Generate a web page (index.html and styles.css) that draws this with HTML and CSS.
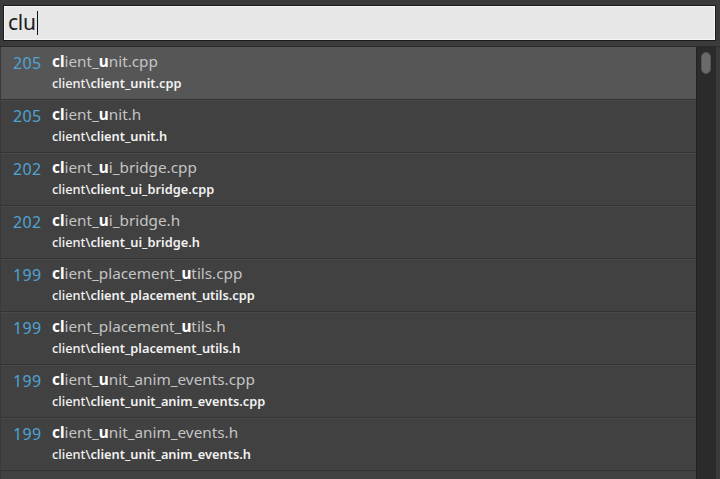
FILE: index.html
```html
<!DOCTYPE html>
<html>
<head>
    <title>Go to file</title>
    <link rel="stylesheet" href="styles.css">
</head>
<body>
    <div class="panel">
        <div class="search">
            <div class="search-box">clu<span class="caret"></span></div>
        </div>
        <div class="results">
            <ul class="list">
                <li class="item selected">
                    <span class="score">205</span>
                    <div class="names">
                        <div class="name"><b>cl</b>ient_<b>u</b>nit.cpp</div>
                        <div class="path"><span class="dir">client\</span>client_unit.cpp</div>
                    </div>
                </li>
                <li class="item">
                    <span class="score">205</span>
                    <div class="names">
                        <div class="name"><b>cl</b>ient_<b>u</b>nit.h</div>
                        <div class="path"><span class="dir">client\</span>client_unit.h</div>
                    </div>
                </li>
                <li class="item">
                    <span class="score">202</span>
                    <div class="names">
                        <div class="name"><b>cl</b>ient_<b>u</b>i_bridge.cpp</div>
                        <div class="path"><span class="dir">client\</span>client_ui_bridge.cpp</div>
                    </div>
                </li>
                <li class="item">
                    <span class="score">202</span>
                    <div class="names">
                        <div class="name"><b>cl</b>ient_<b>u</b>i_bridge.h</div>
                        <div class="path"><span class="dir">client\</span>client_ui_bridge.h</div>
                    </div>
                </li>
                <li class="item">
                    <span class="score">199</span>
                    <div class="names">
                        <div class="name"><b>cl</b>ient_placement_<b>u</b>tils.cpp</div>
                        <div class="path"><span class="dir">client\</span>client_placement_utils.cpp</div>
                    </div>
                </li>
                <li class="item">
                    <span class="score">199</span>
                    <div class="names">
                        <div class="name"><b>cl</b>ient_placement_<b>u</b>tils.h</div>
                        <div class="path"><span class="dir">client\</span>client_placement_utils.h</div>
                    </div>
                </li>
                <li class="item">
                    <span class="score">199</span>
                    <div class="names">
                        <div class="name"><b>cl</b>ient_<b>u</b>nit_anim_events.cpp</div>
                        <div class="path"><span class="dir">client\</span>client_unit_anim_events.cpp</div>
                    </div>
                </li>
                <li class="item">
                    <span class="score">199</span>
                    <div class="names">
                        <div class="name"><b>cl</b>ient_<b>u</b>nit_anim_events.h</div>
                        <div class="path"><span class="dir">client\</span>client_unit_anim_events.h</div>
                    </div>
                </li>
            </ul>
            <div class="scrollbar"><div class="thumb"></div></div>
        </div>
    </div>
</body>
</html>
```

FILE: styles.css
```css
html, body {margin:0;padding:0;}
body {background:#2e2e2e;font-family:"Noto Sans","Open Sans",sans-serif;width:720px;height:479px;overflow:hidden;}

/* search field */
.panel {display:flex;flex-direction:column;height:479px;}
.search {background:#3b3b3b;padding:5px 4px 5px 3px;border-bottom:1px solid #2a2a2a;}
.search-box {background:#e7e7e7;border:1px solid #1c1c1c;height:34px;line-height:33px;font-size:21px;color:#1e1e1e;padding:0 4px;box-shadow:inset 0 0 0 1px #f4f4f4;letter-spacing:-0.3px;}
.caret {display:inline-block;width:1px;height:24px;background:#111;vertical-align:-5px;margin-left:1px;}

/* result list */
.results {display:flex;flex:1;min-height:0;border-right:4px solid #3a3a3a;}
.list {list-style:none;margin:0;padding:0;flex:1;overflow:hidden;border-left:1px solid #393939;background:#414141;}
.item {display:flex;align-items:flex-start;height:52px;background:#414141;border-bottom:1px solid #333;box-shadow:inset 0 1px 0 #4a4a4a;}
.item.selected {background:#565656;box-shadow:none;}
.score {width:51px;padding:5px 0 0 12px;box-sizing:border-box;font-size:16px;color:#4fa3d3;letter-spacing:0.3px;}
.names {padding-top:3px;}
.name {font-size:15.3px;color:#c4c4c4;line-height:22px;}
.name b {color:#fff;font-weight:700;}
.path {font-size:12.8px;font-weight:600;color:#f2f2f2;line-height:18px;margin-top:2px;}
.path .dir {font-weight:500;}

/* scrollbar */
.scrollbar {width:19px;background:#2b2b2b;border-left:1px solid #222;padding-top:5px;}
.thumb {width:10px;height:22px;margin-left:4px;background:#6a6a6a;border-radius:5px;border:1px solid #555;box-sizing:border-box;}
```
